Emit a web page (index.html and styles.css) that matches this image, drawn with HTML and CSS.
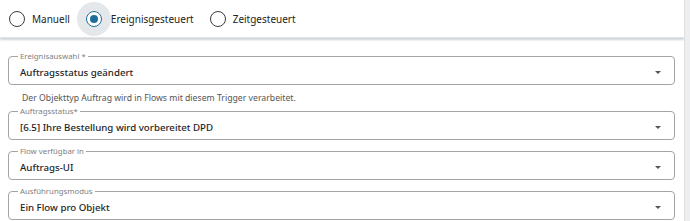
FILE: index.html
```html
<!DOCTYPE html>
<html lang="de">
<head>
    <meta charset="UTF-8">
    <meta name="viewport" content="width=device-width, initial-scale=1.0">
    <title>Trigger</title>
    <link rel="stylesheet" href="styles.css">
</head>
<body>
    <div class="page">
        <div class="content">

            <!-- Trigger Type -->
            <div class="topbar">
                <label class="radio-item">
                    <span class="radio"></span>
                    <span class="radio-label">Manuell</span>
                </label>
                <label class="radio-item">
                    <span class="radio checked"></span>
                    <span class="radio-label">Ereignisgesteuert</span>
                </label>
                <label class="radio-item">
                    <span class="radio"></span>
                    <span class="radio-label">Zeitgesteuert</span>
                </label>
            </div>

            <!-- Fields -->
            <div class="form">
                <fieldset class="field">
                    <legend>Ereignisauswahl *</legend>
                    <div class="field-value">
                        <span>Auftragsstatus geändert</span>
                        <span class="arrow"></span>
                    </div>
                </fieldset>
                <p class="helper">Der Objekttyp Auftrag wird in Flows mit diesem Trigger verarbeitet.</p>

                <fieldset class="field">
                    <legend>Auftragsstatus*</legend>
                    <div class="field-value">
                        <span>[6.5] Ihre Bestellung wird vorbereitet DPD</span>
                        <span class="arrow"></span>
                    </div>
                </fieldset>

                <fieldset class="field">
                    <legend>Flow verfügbar in</legend>
                    <div class="field-value">
                        <span>Auftrags-UI</span>
                        <span class="arrow"></span>
                    </div>
                </fieldset>

                <fieldset class="field">
                    <legend>Ausführungsmodus</legend>
                    <div class="field-value">
                        <span>Ein Flow pro Objekt</span>
                        <span class="arrow"></span>
                    </div>
                </fieldset>
            </div>
        </div>

        <!-- Scrollbar track -->
        <div class="scrollbar"></div>
    </div>
</body>
</html>
```

FILE: styles.css
```css
body {
    margin: 0;
    background-color: #fff;
    font-family: "Noto Sans", "Open Sans", sans-serif;
    color: #222;
    overflow: hidden;
}

.page {
    display: flex;
    height: 221px;
}

.content {
    flex: 1;
    min-width: 0;
}

/* Radio bar */
.topbar {
    display: flex;
    align-items: center;
    gap: 16px;
    height: 38px;
    padding-left: 9px;
    padding-top: 1px;
    box-sizing: border-box;
    background: #fff;
    border-bottom: 1px solid #e1e4e6;
    box-shadow: 0 2px 2px #d0d5d8;
}

.radio-item {
    display: flex;
    align-items: center;
    gap: 7px;
    font-size: 10px;
    color: #222;
}

.radio {
    width: 16px;
    height: 16px;
    box-sizing: border-box;
    border: 1.2px solid #3c3c3c;
    border-radius: 50%;
    display: flex;
    align-items: center;
    justify-content: center;
}

.radio.checked {
    border-color: #1f6d99;
    box-shadow: 0 0 0 9px #e4e8ea;
}

.radio.checked + .radio-label {
    margin-left: 2px;
}

.radio.checked::after {
    content: "";
    width: 8px;
    height: 8px;
    border-radius: 50%;
    background: #1f6d99;
}

/* Form */
.form {
    padding: 14px 9px 0 8px;
}

.field {
    margin: 0 0 7px 0;
    padding: 0 13px 0 11px;
    border: 1px solid #a4a4a4;
    border-radius: 4px;
}

.field legend {
    font-size: 7.8px;
    line-height: 8px;
    color: #808080;
    padding: 0 2px;
    margin-left: -2px;
}

.field-value {
    display: flex;
    align-items: center;
    justify-content: space-between;
    height: 24px;
    font-size: 9.7px;
    font-weight: 500;
    color: #1e1e1e;
}

.arrow {
    width: 0;
    height: 0;
    border-left: 3.5px solid transparent;
    border-right: 3.5px solid transparent;
    border-top: 3.5px solid #555;
}

.helper {
    margin: 0 0 3px 14px;
    font-size: 8.7px;
    line-height: 12px;
    color: #555;
}

/* Scrollbar */
.scrollbar {
    width: 5px;
    background: #eceeef;
    border-left: 1px solid #dcdfe1;
}
```
